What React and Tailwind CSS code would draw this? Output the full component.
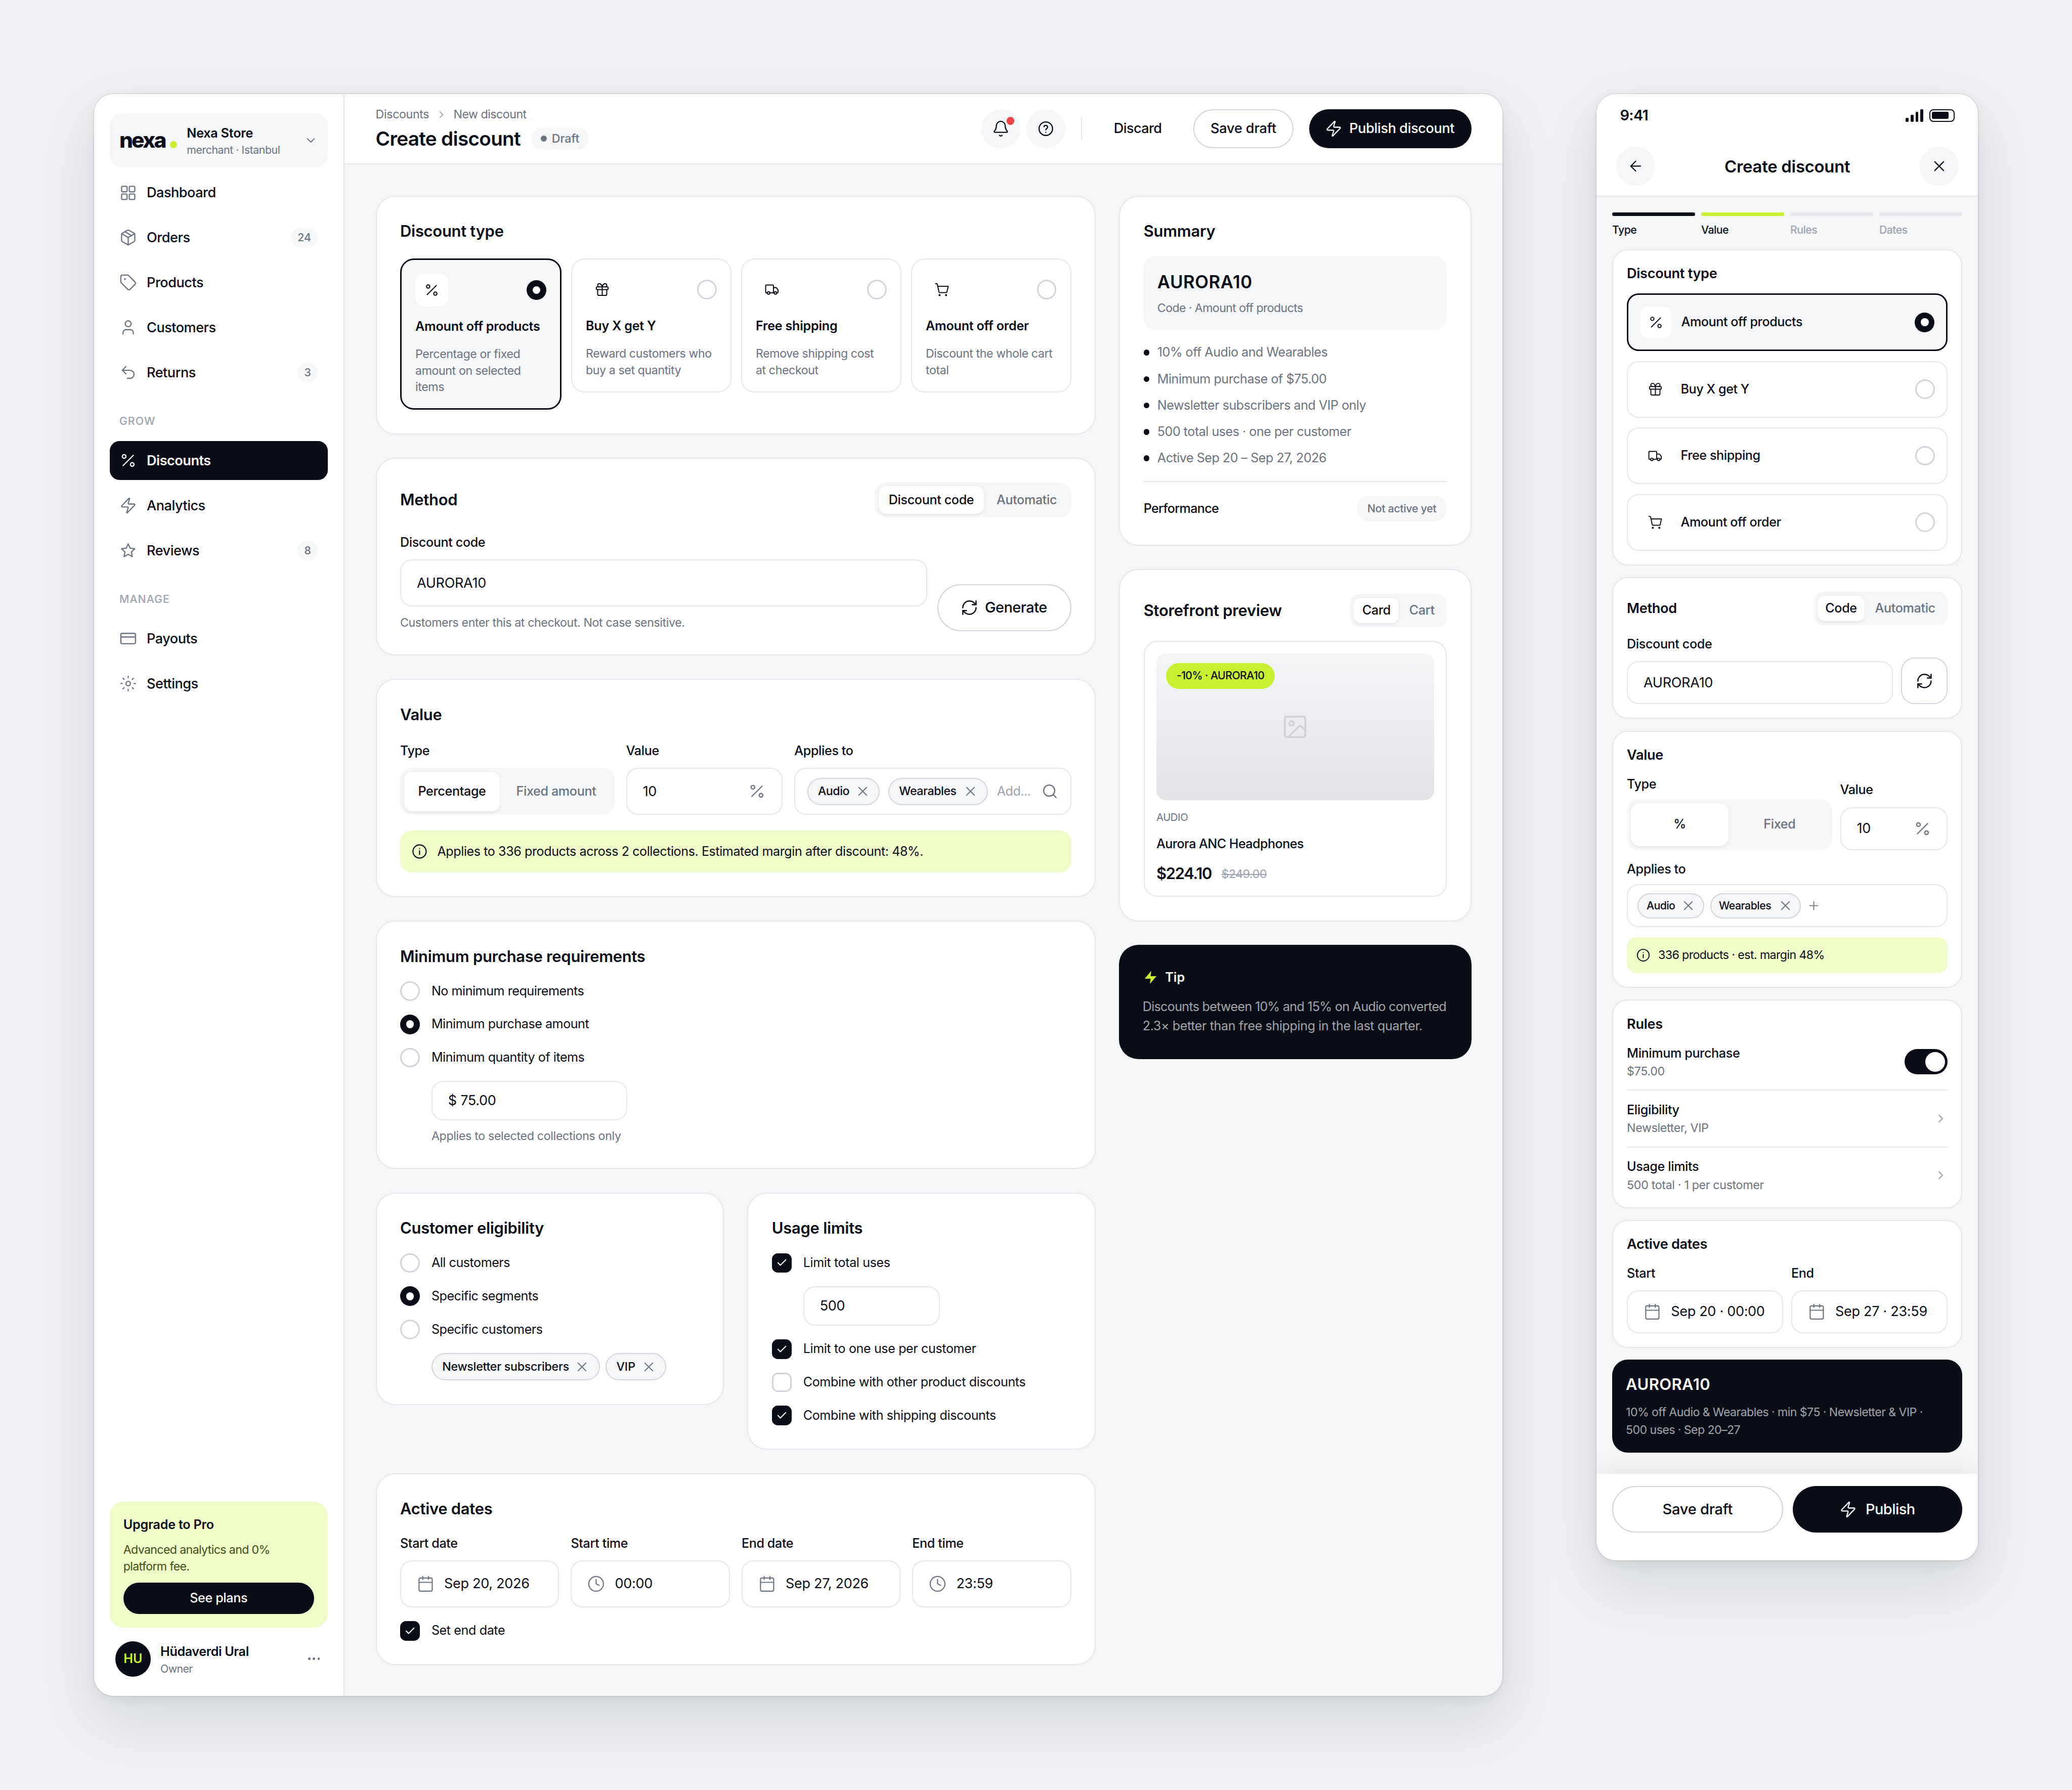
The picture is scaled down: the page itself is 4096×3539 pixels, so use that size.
import clsx from "clsx";
import {
  ArrowLeft,
  Bell,
  Calendar,
  Check,
  ChevronDown,
  ChevronRight,
  Clock,
  CreditCard,
  Gift,
  Image,
  Package,
  Percent,
  Plus,
  RefreshCw,
  Search,
  Tag,
  Undo2,
  User,
  X,
  Zap,
} from "lucide-react";

const svgProps = {
  viewBox: "0 0 24 24",
  fill: "none",
  stroke: "currentColor",
  strokeLinecap: "round",
  strokeLinejoin: "round",
};

function GridIcon({ className, strokeWidth }) {
  return (
    <svg {...svgProps} strokeWidth={strokeWidth} className={className}>
      <rect x="3" y="3" width="7.5" height="7.5" rx="1.5" />
      <rect x="13.5" y="3" width="7.5" height="7.5" rx="1.5" />
      <rect x="3" y="13.5" width="7.5" height="7.5" rx="1.5" />
      <rect x="13.5" y="13.5" width="7.5" height="7.5" rx="1.5" />
    </svg>
  );
}

function StarIcon({ className, strokeWidth }) {
  return (
    <svg {...svgProps} strokeWidth={strokeWidth} className={className}>
      <path d="M12 3l2.7 5.8 6.3.8-4.6 4.4 1.2 6.3L12 17.2l-5.6 3.1L7.6 14 3 9.6l6.3-.8z" />
    </svg>
  );
}

function SettingsIcon({ className, strokeWidth }) {
  return (
    <svg {...svgProps} strokeWidth={strokeWidth} className={className}>
      <circle cx="12" cy="12" r="3" />
      <path d="M12 2v2M12 20v2M2 12h2M20 12h2M4.93 4.93l1.41 1.41M17.66 17.66l1.41 1.41M4.93 19.07l1.41-1.41M17.66 6.34l1.41-1.41" />
    </svg>
  );
}

function TruckIcon({ className, strokeWidth }) {
  return (
    <svg {...svgProps} strokeWidth={strokeWidth} className={className}>
      <path d="M4.5 17H3a1 1 0 0 1-1-1V6a1 1 0 0 1 1-1h10a1 1 0 0 1 1 1v11H8.5" />
      <path d="M14 9h3.8a1 1 0 0 1 .8.4l2.2 2.9a1 1 0 0 1 .2.6V16a1 1 0 0 1-1 1h-1" />
      <circle cx="6.5" cy="17.3" r="1.9" />
      <circle cx="17" cy="17.3" r="1.9" />
    </svg>
  );
}

function CartIcon({ className, strokeWidth }) {
  return (
    <svg {...svgProps} strokeWidth={strokeWidth} className={className}>
      <path d="M2 3h1.6a1 1 0 0 1 1 .8l2.5 11.9a1.3 1.3 0 0 0 1.3 1h9.6a1.3 1.3 0 0 0 1.3-1L21.3 7H5.3" />
      <circle cx="8" cy="20.6" r="1.2" fill="currentColor" strokeWidth="0.8" />
      <circle cx="18" cy="20.6" r="1.2" fill="currentColor" strokeWidth="0.8" />
    </svg>
  );
}

function InfoIcon({ className }) {
  return (
    <svg {...svgProps} strokeWidth="1.5" className={className}>
      <circle cx="12" cy="12" r="9" />
      <path d="M12 11v5M12 8v.01" />
    </svg>
  );
}

function HelpIcon({ className }) {
  return (
    <svg {...svgProps} strokeWidth="1.6" className={className}>
      <circle cx="12" cy="12" r="9.2" />
      <path d="M9.5 9.3a2.5 2.5 0 0 1 4.9.8c0 1.6-2.4 2-2.4 3.6M12 17v.01" />
    </svg>
  );
}

const mainNav = [
  { label: "Dashboard", icon: GridIcon },
  { label: "Orders", icon: Package, badge: "24" },
  { label: "Products", icon: Tag },
  { label: "Customers", icon: User },
  { label: "Returns", icon: Undo2, badge: "3" },
];

const growNav = [
  { label: "Discounts", icon: Percent, active: true },
  { label: "Analytics", icon: Zap },
  { label: "Reviews", icon: StarIcon, badge: "8" },
];

const manageNav = [
  { label: "Payouts", icon: CreditCard },
  { label: "Settings", icon: SettingsIcon },
];

const discountTypes = [
  { label: "Amount off products", icon: Percent, text: ["Percentage or fixed", "amount on selected", "items"], active: true },
  { label: "Buy X get Y", icon: Gift, text: ["Reward customers who", "buy a set quantity"] },
  { label: "Free shipping", icon: TruckIcon, text: ["Remove shipping cost", "at checkout"] },
  { label: "Amount off order", icon: CartIcon, text: ["Discount the whole cart", "total"] },
];

const summary = [
  "10% off Audio and Wearables",
  "Minimum purchase of $75.00",
  "Newsletter subscribers and VIP only",
  "500 total uses · one per customer",
  "Active Sep 20 – Sep 27, 2026",
];

function NavItem({ label, icon: Icon, badge, active }) {
  return (
    <div className={clsx("flex h-10 items-center gap-2.5 rounded-[10px] px-2.5", active && "bg-[#0b0e18] text-white")}>
      <Icon className={clsx("size-[18px]", !active && "text-[#6b7280]")} strokeWidth={1.6} />
      <span className={clsx("flex-1 pt-[0.5px] text-[14px]", active ? "font-semibold tracking-[-0.018em]" : "font-medium tracking-[-0.018em]")}>
        {label}
      </span>
      {badge && (
        <span className="flex h-5 items-center rounded-full bg-[#f4f6f8] px-[7px] text-[11px] font-medium text-[#6b7280]">{badge}</span>
      )}
    </div>
  );
}

function NavHeading({ children }) {
  return (
    <div className="flex h-8 items-center px-2.5 pt-4 text-[11px] font-medium tracking-[0.05em] text-[#9ca3af]">{children}</div>
  );
}

function Card({ className, children }) {
  return (
    <section className={clsx("rounded-[20px] border-[1.04px] border-[#e5e7eb] bg-white p-6", className)}>{children}</section>
  );
}

function Title({ children }) {
  return <h2 className="h-[23px] text-[16px] leading-[23px] font-semibold tracking-[-0.009em]">{children}</h2>;
}

function Label({ children }) {
  return <div className="h-[19px] text-[13px] leading-[19px] font-medium tracking-[-0.015em]">{children}</div>;
}

function Radio({ checked }) {
  if (checked) {
    return (
      <span className="flex size-5 shrink-0 items-center justify-center rounded-full bg-[#0b0e18]">
        <span className="size-2 rounded-full bg-white" />
      </span>
    );
  }
  return <span className="size-5 shrink-0 rounded-full border-[1.56px] border-[#d1d5db] bg-white" />;
}

function RadioRow({ label, checked }) {
  return (
    <div className="flex h-5 items-center gap-3 text-[13px] tracking-[-0.019em]">
      <Radio checked={checked} />
      {label}
    </div>
  );
}

function CheckRow({ label, checked }) {
  return (
    <div className="flex h-5 items-center gap-3 text-[13px] tracking-[-0.016em]">
      {checked ? (
        <span className="flex size-5 items-center justify-center rounded-md bg-[#0b0e18] text-white">
          <Check className="size-3" strokeWidth={2.2} />
        </span>
      ) : (
        <span className="size-5 rounded-md border-[1.56px] border-[#d1d5db] bg-white" />
      )}
      {label}
    </div>
  );
}

function Input({ className, children }) {
  return (
    <div className={clsx("flex items-center rounded-xl border-[1.04px] border-[#e5e7eb] bg-white px-4 text-[14px] tracking-[-0.012em]", className)}>
      {children}
    </div>
  );
}

function Chip({ className, children }) {
  return (
    <span
      className={clsx(
        "flex shrink-0 items-center justify-between rounded-full border-[1.04px] border-[#d1d5db] bg-[#f4f6f8] font-medium",
        className
      )}
    >
      {children}
      <X className="size-4 text-[#6b7280]" strokeWidth={1.5} />
    </span>
  );
}

function Tab({ active, className, children }) {
  return (
    <span
      className={clsx(
        "flex items-center justify-center text-[13px] font-medium tracking-[-0.014em]",
        active ? "bg-white shadow-[0_1px_3px_rgba(11,14,24,0.08)]" : "text-[#6b7280]",
        className
      )}
    >
      {children}
    </span>
  );
}

function Sidebar() {
  return (
    <aside className="flex w-64 shrink-0 flex-col border-r-[1.04px] border-[#e5e7eb] bg-white px-4 pt-5 pb-3.5">
      <div className="flex h-[55px] items-center rounded-xl bg-[#f4f6f8] pl-2.5">
        <span className="w-[52px] text-[22px] leading-none font-extrabold tracking-[-0.066em]">nexa</span>
        <span className="mt-[9px] size-[7px] rounded-full bg-[#c8f031]" />
        <div className="mt-[2px] ml-[10px] flex-1">
          <div className="text-[13px] leading-[18px] font-semibold tracking-[-0.009em]">Nexa Store</div>
          <div className="text-[11px] leading-[17px] tracking-[-0.02em] text-[#6b7280]">merchant · Istanbul</div>
        </div>
        <ChevronDown className="mr-[10px] size-3.5 text-[#6b7280]" strokeWidth={1.8} />
      </div>

      <nav className="mt-1.5 flex flex-col gap-1.5">
        {mainNav.map((item) => (
          <NavItem key={item.label} {...item} />
        ))}
        <div className="flex flex-col gap-1.5">
          <NavHeading>GROW</NavHeading>
          <div />
          {growNav.map((item) => (
            <NavItem key={item.label} {...item} />
          ))}
        </div>
        <div className="flex flex-col gap-1.5">
          <NavHeading>MANAGE</NavHeading>
          <div />
          {manageNav.map((item) => (
            <NavItem key={item.label} {...item} />
          ))}
        </div>
      </nav>

      <div className="mt-auto h-[129px] rounded-[14px] bg-[#effcc8] px-3.5 pt-3.5">
        <div className="text-[13px] leading-[19px] font-semibold tracking-[-0.008em]">Upgrade to Pro</div>
        <p className="mt-2 text-[12px] leading-[17px] tracking-[-0.028em] text-[#3f4f12]">
          Advanced analytics and 0%
          <br />
          platform fee.
        </p>
        <button className="mt-2 flex h-8 w-full items-center justify-center rounded-full bg-[#0b0e18] text-[13px] font-medium tracking-[-0.014em] text-white">
          See plans
        </button>
      </div>

      <div className="mt-2 flex h-12 items-center px-1.5">
        <span className="flex size-9 items-center justify-center rounded-full bg-[#0b0e18] text-[13px] font-semibold text-[#c8f031]">HU</span>
        <div className="mt-[2px] ml-2.5 flex-1">
          <div className="text-[13px] leading-[18px] font-semibold tracking-[-0.0155em]">Hüdaverdi Ural</div>
          <div className="text-[11px] leading-[17px] tracking-[-0.03em] text-[#6b7280]">Owner</div>
        </div>
        <div className="mr-0.5 flex gap-[2.2px]">
          <span className="size-[2.5px] rounded-full bg-[#6b7280]" />
          <span className="size-[2.5px] rounded-full bg-[#6b7280]" />
          <span className="size-[2.5px] rounded-full bg-[#6b7280]" />
        </div>
      </div>
    </aside>
  );
}

function Header() {
  return (
    <header className="flex h-[72px] items-center justify-between border-b-[1.04px] border-[#e5e7eb] bg-white px-8">
      <div className="pt-[1.5px]">
        <div className="flex h-[17px] items-center text-[12px] text-[#6b7280]">
          <span className="tracking-[-0.015em]">Discounts</span>
          <ChevronRight className="mx-[6.5px] size-3 text-[#9ca3af]" strokeWidth={1.8} />
          <span className="tracking-[-0.022em]">New discount</span>
        </div>
        <div className="mt-[2px] flex h-7 items-center">
          <h1 className="text-[20px] font-semibold tracking-[-0.0178em]">Create discount</h1>
          <span className="ml-[11px] flex h-[23px] w-[59px] items-center justify-center gap-[5px] rounded-full bg-[#f4f6f8] text-[12px] font-medium text-[#6b7280]">
            <span className="size-1.5 rounded-full bg-[#6b7280]" />
            Draft
          </span>
        </div>
      </div>
      <div className="flex items-center gap-4">
        <div className="flex gap-1.5">
          <span className="relative flex size-10 items-center justify-center rounded-full bg-[#f4f6f8]">
            <Bell className="size-[18px]" strokeWidth={1.6} />
            <span className="absolute top-2 right-1.5 size-2 rounded-full bg-[#ef4444]" />
          </span>
          <span className="flex size-10 items-center justify-center rounded-full bg-[#f4f6f8]">
            <HelpIcon className="size-[18px]" />
          </span>
        </div>
        <span className="h-6 w-[1.04px] bg-[#e5e7eb]" />
        <button className="h-10 w-[82px] text-[14px] font-medium tracking-[-0.022em]">Discard</button>
        <button className="h-10 w-[102px] rounded-full border-[1.04px] border-[#d1d5db] text-[14px] font-medium tracking-[-0.005em]">
          Save draft
        </button>
        <button className="flex h-10 w-[166px] items-center justify-center gap-[7px] rounded-full bg-[#0b0e18] pr-px text-[14px] font-medium tracking-[-0.014em] text-white">
          <Zap className="size-[18px]" strokeWidth={1.6} />
          Publish discount
        </button>
      </div>
    </header>
  );
}

function TypeOption({ label, icon: Icon, text, active }) {
  return (
    <div
      className={clsx(
        "flex-1 self-start rounded-[14px] px-3.5 pt-3.5 pb-[13px]",
        active ? "border-[1.56px] border-[#0b0e18] bg-[#f4f6f8]" : "border-[1.04px] border-[#e5e7eb]"
      )}
    >
      <div className="flex h-[34px] items-center justify-between">
        <span className="flex size-[34px] items-center justify-center rounded-[10px] bg-white">
          <Icon className="size-4" strokeWidth={1.6} />
        </span>
        <Radio checked={active} />
      </div>
      <div className="mt-[11px] text-[13px] leading-[18px] font-semibold tracking-[-0.009em] whitespace-nowrap">{label}</div>
      <div className="mt-[11px] text-[12px] leading-[17px] tracking-[-0.018em] whitespace-nowrap text-[#6b7280]">
        {text.map((line) => (
          <div key={line}>{line}</div>
        ))}
      </div>
    </div>
  );
}

function MethodCard() {
  return (
    <Card>
      <div className="flex h-9 items-center justify-between">
        <Title>Method</Title>
        <div className="flex h-9 w-[201px] gap-0.5 rounded-xl bg-[#f4f6f8] p-1">
          <Tab active className="w-[108px] rounded-lg">Discount code</Tab>
          <Tab className="flex-1 rounded-lg">Automatic</Tab>
        </div>
      </div>
      <div className="mt-4 flex h-[100px] items-end justify-between">
        <div className="h-full">
          <Label>Discount code</Label>
          <Input className="mt-2 h-12 w-[539px]">AURORA10</Input>
          <div className="mt-2 text-[12px] leading-[17px] tracking-[-0.017em] text-[#6b7280]">
            Customers enter this at checkout. Not case sensitive.
          </div>
        </div>
        <button className="flex h-12 w-[137px] items-center justify-center gap-[7px] rounded-full border-[1.04px] border-[#d1d5db] pr-px text-[15px] font-medium tracking-[-0.02em]">
          <RefreshCw className="size-[18px]" strokeWidth={1.7} />
          Generate
        </button>
      </div>
    </Card>
  );
}

function ValueCard() {
  return (
    <Card>
      <Title>Value</Title>
      <div className="mt-4 flex gap-3">
        <div className="w-[219px]">
          <Label>Type</Label>
          <div className="mt-2 flex h-12 gap-0.5 rounded-xl bg-[#f4f6f8] p-1">
            <Tab active className="w-[98px] rounded-lg">Percentage</Tab>
            <Tab className="flex-1 rounded-lg">Fixed amount</Tab>
          </div>
        </div>
        <div className="w-[160px]">
          <Label>Value</Label>
          <Input className="mt-2 h-12 justify-between">
            10
            <Percent className="size-[18px] text-[#6b7280]" strokeWidth={1.6} />
          </Input>
        </div>
        <div className="flex-1">
          <Label>Applies to</Label>
          <div className="mt-2 flex h-12 items-center gap-[9px] rounded-xl border-[1.04px] border-[#e5e7eb] px-3">
            <Chip className="h-7 w-[74px] pr-2 pl-2.5 text-[12px] tracking-[-0.02em]">Audio</Chip>
            <Chip className="h-7 w-[102px] pr-[9px] pl-2.5 text-[12px] tracking-[-0.02em]">Wearables</Chip>
            <span className="flex-1 text-[13px] tracking-[-0.02em] text-[#9ca3af]">Add...</span>
            <Search className="size-[17px] text-[#6b7280]" strokeWidth={1.7} />
          </div>
        </div>
      </div>
      <div className="mt-4 flex h-[43px] items-center gap-[9px] rounded-xl bg-[#effcc8] px-[11px] text-[13px] tracking-[-0.0172em]">
        <InfoIcon className="size-[18px]" />
        Applies to 336 products across 2 collections. Estimated margin after discount: 48%.
      </div>
    </Card>
  );
}

function MinimumCard() {
  return (
    <Card className="flex flex-col gap-3.5">
      <Title>Minimum purchase requirements</Title>
      <RadioRow label="No minimum requirements" />
      <RadioRow label="Minimum purchase amount" checked />
      <RadioRow label="Minimum quantity of items" />
      <div className="ml-8">
        <Input className="h-10 w-[200px]">$ 75.00</Input>
        <div className="mt-2 text-[12px] leading-[17px] tracking-[-0.014em] text-[#6b7280]">Applies to selected collections only</div>
      </div>
    </Card>
  );
}

function DateField({ label, icon: Icon, value }) {
  return (
    <div className="flex-1">
      <Label>{label}</Label>
      <Input className="mt-2 h-12 gap-2.5">
        <Icon className="size-[18px] text-[#6b7280]" strokeWidth={1.5} />
        {value}
      </Input>
    </div>
  );
}

function SummaryCard() {
  return (
    <Card>
      <Title>Summary</Title>
      <div className="mt-3.5 h-[75px] rounded-xl bg-[#f4f6f8] px-3.5 pt-[13.5px]">
        <div className="text-[18px] leading-[25px] font-semibold tracking-[0.015em]">AURORA10</div>
        <div className="mt-[6px] text-[12px] leading-[17px] tracking-[-0.0265em] text-[#6b7280]">Code · Amount off products</div>
      </div>
      <ul className="mt-3.5 flex flex-col gap-2">
        {summary.map((line) => (
          <li key={line} className="flex h-[19px] items-center gap-2 text-[13px] tracking-[-0.02em] text-[#6b7280]">
            <span className="size-1.5 rounded-full bg-[#0b0e18]" />
            {line}
          </li>
        ))}
      </ul>
      <div className="mt-3.5 flex h-[41px] items-end justify-between border-t-[1.04px] border-[#e5e7eb]">
        <span className="flex h-[26px] items-center text-[13px] font-medium tracking-[-0.027em]">Performance</span>
        <span className="flex h-[26px] w-[92px] items-center justify-center rounded-full bg-[#f4f6f8] text-[11px] font-medium tracking-[-0.0135em] text-[#6b7280]">
          Not active yet
        </span>
      </div>
    </Card>
  );
}

function PreviewCard() {
  return (
    <Card>
      <div className="flex h-[34px] items-center justify-between">
        <Title>Storefront preview</Title>
        <div className="flex h-[34px] w-[99px] gap-0.5 rounded-[10px] bg-[#f4f6f8] p-1">
          <Tab active className="w-[46px] rounded-[7px]">Card</Tab>
          <Tab className="flex-1 rounded-[7px]">Cart</Tab>
        </div>
      </div>
      <div className="mt-3.5 h-[262px] rounded-[14px] border-[1.04px] border-[#e5e7eb] p-3">
        <div className="relative flex h-[150px] items-center justify-center rounded-[10px] bg-linear-to-b from-[#f4f5f7] to-[#e1e3e7]">
          <span className="absolute top-2.5 left-2.5 flex h-[26px] w-[111px] items-center justify-center rounded-full bg-[#c8f031] text-[11px] font-medium tracking-[-0.028em]">
            -10% · AURORA10
          </span>
          <Image className="size-7 text-[#cdcfd3]" strokeWidth={1.5} />
        </div>
        <div className="mt-2.5 text-[10.5px] leading-[15px] tracking-[-0.02em] text-[#6b7280]">AUDIO</div>
        <div className="mt-2.5 text-[13px] leading-[19px] font-medium tracking-[-0.022em]">Aurora ANC Headphones</div>
        <div className="mt-2.5 flex h-[22px] items-center gap-2.5">
          <span className="text-[16px] leading-[22px] font-semibold tracking-[-0.042em]">$224.10</span>
          <span className="pt-[2px] text-[12px] leading-[17px] tracking-[-0.02em] text-[#9ca3af] line-through">$249.00</span>
        </div>
      </div>
    </Card>
  );
}

function TipCard() {
  return (
    <div className="h-[117px] rounded-[20px] bg-[#0b0e18] p-6 text-white">
      <div className="flex h-[19px] items-center gap-[7px] text-[13px] font-semibold">
        <svg viewBox="0 0 24 24" className="size-4" fill="#c8f031">
          <path d="M13 2 3 14h9l-1 8 10-12h-9z" />
        </svg>
        Tip
      </div>
      <p className="mt-2.5 text-[13px] leading-5 tracking-[-0.028em] whitespace-nowrap text-[#a1a4ab]">
        Discounts between 10% and 15% on Audio converted
        <br />
        <span className="tracking-[-0.016em]">2.3× better than free shipping in the last quarter.</span>
      </p>
    </div>
  );
}

function Desktop() {
  return (
    <div className="flex h-[1638px] w-[1440px] shrink-0 overflow-hidden rounded-[20px] bg-[#f4f6f8] shadow-[0_0_0_1px_rgba(11,14,24,0.07),0_4px_12px_rgba(11,14,24,0.05),0_24px_60px_rgba(11,14,24,0.11)]">
      <Sidebar />
      <div className="flex-1">
        <Header />
        <div className="flex gap-6 p-8">
          <div className="flex w-[736px] flex-col gap-6">
            <Card>
              <Title>Discount type</Title>
              <div className="mt-4 flex gap-2.5">
                {discountTypes.map((type) => (
                  <TypeOption key={type.label} {...type} />
                ))}
              </div>
            </Card>
            <MethodCard />
            <ValueCard />
            <MinimumCard />
            <div className="flex items-start gap-6">
              <Card className="flex w-[356px] flex-col gap-3.5">
                <Title>Customer eligibility</Title>
                <RadioRow label="All customers" />
                <RadioRow label="Specific segments" checked />
                <RadioRow label="Specific customers" />
                <div className="ml-8 flex gap-1.5">
                  <Chip className="h-7 w-[172px] pr-[9px] pl-2.5 text-[12px] tracking-[-0.012em]">Newsletter subscribers</Chip>
                  <Chip className="h-7 w-[62px] pr-[9px] pl-2.5 text-[12px]">VIP</Chip>
                </div>
              </Card>
              <Card className="flex w-[356px] flex-col gap-3.5">
                <Title>Usage limits</Title>
                <CheckRow label="Limit total uses" checked />
                <Input className="ml-8 h-10 w-[140px]">500</Input>
                <CheckRow label="Limit to one use per customer" checked />
                <CheckRow label="Combine with other product discounts" />
                <CheckRow label="Combine with shipping discounts" checked />
              </Card>
            </div>
            <Card className="flex flex-col gap-3.5">
              <Title>Active dates</Title>
              <div className="flex gap-3">
                <DateField label="Start date" icon={Calendar} value="Sep 20, 2026" />
                <DateField label="Start time" icon={Clock} value="00:00" />
                <DateField label="End date" icon={Calendar} value="Sep 27, 2026" />
                <DateField label="End time" icon={Clock} value="23:59" />
              </div>
              <CheckRow label="Set end date" checked />
            </Card>
          </div>
          <div className="flex flex-1 flex-col gap-6">
            <SummaryCard />
            <PreviewCard />
            <TipCard />
          </div>
        </div>
      </div>
    </div>
  );
}

function MobileCard({ className, children }) {
  return (
    <section className={clsx("rounded-2xl border-[1.04px] border-[#e5e7eb] bg-white p-3.5", className)}>{children}</section>
  );
}

function MobileTitle({ children }) {
  return <h3 className="h-5 text-[14px] leading-5 font-semibold tracking-[-0.011em]">{children}</h3>;
}

function Step({ label, bar, text }) {
  return (
    <div className="flex-1">
      <div className={clsx("h-1 rounded-full", bar)} />
      <div className={clsx("mt-1.5 text-[11px] leading-4 font-medium tracking-[-0.025em]", text)}>{label}</div>
    </div>
  );
}

function MobileTypeOption({ label, icon: Icon, active }) {
  return (
    <div
      className={clsx(
        "flex items-center rounded-xl px-3",
        active ? "h-[59px] border-[1.56px] border-[#0b0e18] bg-[#f4f6f8]" : "h-[58px] border-[1.04px] border-[#e5e7eb]"
      )}
    >
      <span className="flex size-8 items-center justify-center rounded-lg bg-white">
        <Icon className="size-4" strokeWidth={1.5} />
      </span>
      <span className="ml-2.5 flex-1 text-[13px] font-medium tracking-[-0.017em]">{label}</span>
      <Radio checked={active} />
    </div>
  );
}

function RuleRow({ label, text, children }) {
  return (
    <div className="flex h-[37px] items-center justify-between">
      <div>
        <div className="text-[13px] leading-[19px] font-medium tracking-[-0.015em]">{label}</div>
        <div className="mt-px text-[12px] leading-[17px] tracking-[-0.014em] text-[#6b7280]">{text}</div>
      </div>
      {children}
    </div>
  );
}

function Phone() {
  return (
    <div className="flex h-[1499px] w-[390px] shrink-0 flex-col overflow-hidden rounded-[20px] bg-[#f4f6f8] shadow-[0_0_0_1px_rgba(11,14,24,0.07),0_4px_12px_rgba(11,14,24,0.05),0_24px_60px_rgba(11,14,24,0.11)]">
      <div className="bg-white">
        <div className="flex h-11 items-center justify-between px-6">
          <span className="text-[15px] font-semibold tracking-[-0.024em]">9:41</span>
          <div className="flex items-center gap-1.5">
            <div className="flex items-end gap-[2px]">
              <span className="h-1 w-[3px] rounded-[1px] bg-[#0b0e18]" />
              <span className="h-[7px] w-[3px] rounded-[1px] bg-[#0b0e18]" />
              <span className="h-2.5 w-[3px] rounded-[1px] bg-[#0b0e18]" />
              <span className="h-[13px] w-[3px] rounded-[1px] bg-[#0b0e18]" />
            </div>
            <span className="flex h-[13px] w-[26px] items-center rounded-[4px] border-[1.04px] border-[#0b0e18] pl-[2px]">
              <span className="h-[7px] w-[17px] rounded-[1.5px] bg-[#0b0e18]" />
            </span>
          </div>
        </div>
        <div className="flex h-[61px] items-center justify-between border-b-[1.04px] border-[#e5e7eb] px-5">
          <span className="flex size-10 items-center justify-center rounded-full bg-[#f4f6f8]">
            <ArrowLeft className="size-[17px]" strokeWidth={1.6} />
          </span>
          <h2 className="pt-[1.5px] text-[17px] font-semibold tracking-[-0.008em]">Create discount</h2>
          <span className="flex size-10 items-center justify-center rounded-full bg-[#f4f6f8]">
            <X className="size-[18px]" strokeWidth={1.6} />
          </span>
        </div>
      </div>

      <div className="flex flex-1 flex-col gap-3 p-4">
        <div className="flex gap-1.5">
          <Step label="Type" bar="bg-[#0b0e18]" />
          <Step label="Value" bar="bg-[#c8f031]" />
          <Step label="Rules" bar="bg-[#e5e7eb]" text="text-[#9ca3af]" />
          <Step label="Dates" bar="bg-[#e5e7eb]" text="text-[#9ca3af]" />
        </div>

        <MobileCard className="flex flex-col gap-2.5">
          <MobileTitle>Discount type</MobileTitle>
          {discountTypes.map((type) => (
            <MobileTypeOption key={type.label} {...type} />
          ))}
        </MobileCard>

        <MobileCard>
          <div className="flex h-[34px] items-center justify-between">
            <MobileTitle>Method</MobileTitle>
            <div className="flex h-[34px] w-[137px] gap-0.5 rounded-[10px] bg-[#f4f6f8] p-1">
              <Tab active className="w-12 rounded-[7px]">Code</Tab>
              <Tab className="flex-1 rounded-[7px]">Automatic</Tab>
            </div>
          </div>
          <div className="mt-2.5 flex items-end justify-between">
            <div>
              <Label>Discount code</Label>
              <Input className="mt-2 h-11 w-[272px]">AURORA10</Input>
            </div>
            <span className="flex size-12 items-center justify-center rounded-[14px] border-[1.04px] border-[#d1d5db]">
              <RefreshCw className="size-[18px]" strokeWidth={1.7} />
            </span>
          </div>
        </MobileCard>

        <MobileCard>
          <MobileTitle>Value</MobileTitle>
          <div className="mt-2.5 flex items-end justify-between">
            <div>
              <Label>Type</Label>
              <div className="mt-1.5 flex h-[52px] w-[210px] gap-0.5 rounded-xl bg-[#f4f6f8] p-1">
                <Tab active className="flex-1 rounded-[9px]">%</Tab>
                <Tab className="flex-1 rounded-[9px]">Fixed</Tab>
              </div>
            </div>
            <div>
              <Label>Value</Label>
              <Input className="mt-2 h-11 w-[110px] justify-between">
                10
                <Percent className="size-[18px] text-[#6b7280]" strokeWidth={1.6} />
              </Input>
            </div>
          </div>
          <div className="mt-2.5">
            <Label>Applies to</Label>
            <div className="mt-1.5 flex h-11 items-center gap-1.5 rounded-xl border-[1.04px] border-[#e5e7eb] px-2.5">
              <Chip className="h-[26px] w-[68px] pr-[7px] pl-2 text-[11px] tracking-[-0.026em]">Audio</Chip>
              <Chip className="h-[26px] w-[93px] pr-[7px] pl-2 text-[11px] tracking-[-0.024em]">Wearables</Chip>
              <Plus className="size-3.5 text-[#6b7280]" strokeWidth={1.6} />
            </div>
          </div>
          <div className="mt-2.5 flex h-[37px] items-center gap-[7px] rounded-[10px] bg-[#effcc8] px-[9px] text-[12px] tracking-[-0.026em]">
            <InfoIcon className="size-4" />
            336 products · est. margin 48%
          </div>
        </MobileCard>

        <MobileCard>
          <MobileTitle>Rules</MobileTitle>
          <div className="mt-2.5">
            <RuleRow label="Minimum purchase" text="$75.00">
              <span className="flex h-[26px] w-11 items-center justify-end rounded-full bg-[#0b0e18] p-[3px]">
                <span className="size-5 rounded-full bg-white" />
              </span>
            </RuleRow>
            <hr className="my-2.5 border-t-[1.04px] border-[#e5e7eb]" />
            <RuleRow label="Eligibility" text="Newsletter, VIP">
              <ChevronRight className="size-3.5 text-[#9ca3af]" strokeWidth={1.8} />
            </RuleRow>
            <hr className="my-2.5 border-t-[1.04px] border-[#e5e7eb]" />
            <RuleRow label="Usage limits" text="500 total · 1 per customer">
              <ChevronRight className="size-3.5 text-[#9ca3af]" strokeWidth={1.8} />
            </RuleRow>
          </div>
        </MobileCard>

        <MobileCard>
          <MobileTitle>Active dates</MobileTitle>
          <div className="mt-2.5 flex gap-2">
            <div className="flex-1">
              <Label>Start</Label>
              <Input className="mt-2 h-11 gap-2.5 whitespace-nowrap">
                <Calendar className="size-[18px] shrink-0 text-[#6b7280]" strokeWidth={1.5} />
                Sep 20 · 00:00
              </Input>
            </div>
            <div className="flex-1">
              <Label>End</Label>
              <Input className="mt-2 h-11 gap-2.5 whitespace-nowrap">
                <Calendar className="size-[18px] shrink-0 text-[#6b7280]" strokeWidth={1.5} />
                Sep 27 · 23:59
              </Input>
            </div>
          </div>
        </MobileCard>

        <div className="h-[95px] rounded-2xl bg-[#0b0e18] p-3.5 text-white">
          <div className="text-[16px] leading-[23px] font-semibold tracking-[0.014em]">AURORA10</div>
          <p className="mt-2 text-[12px] leading-[18px] tracking-[-0.026em] whitespace-nowrap text-[#a1a4ab]">
            10% off Audio &amp; Wearables · min $75 · Newsletter &amp; VIP ·
            <br />
            500 uses · Sep 20–27
          </p>
        </div>
      </div>

      <div className="flex h-[88px] items-start gap-2.5 bg-white px-4 pt-3 shadow-[0_-8px_20px_rgba(11,14,24,0.06)]">
        <button className="h-12 flex-1 rounded-full border-[1.04px] border-[#d1d5db] text-[15px] font-medium tracking-[-0.008em]">
          Save draft
        </button>
        <button className="flex h-12 flex-1 items-center justify-center gap-[9px] rounded-full bg-[#0b0e18] pr-px text-[15px] font-medium tracking-[-0.02em] text-white">
          <Zap className="size-[18px]" strokeWidth={1.6} />
          Publish
        </button>
      </div>
    </div>
  );
}

export default function App() {
  return (
    <div className="flex h-[1829.9px] w-[2118px] items-start gap-24 overflow-hidden bg-[#eef0f4] p-24 font-['Inter',sans-serif] text-[#0b0e18] antialiased [zoom:1.9339]">
      <Desktop />
      <Phone />
    </div>
  );
}
